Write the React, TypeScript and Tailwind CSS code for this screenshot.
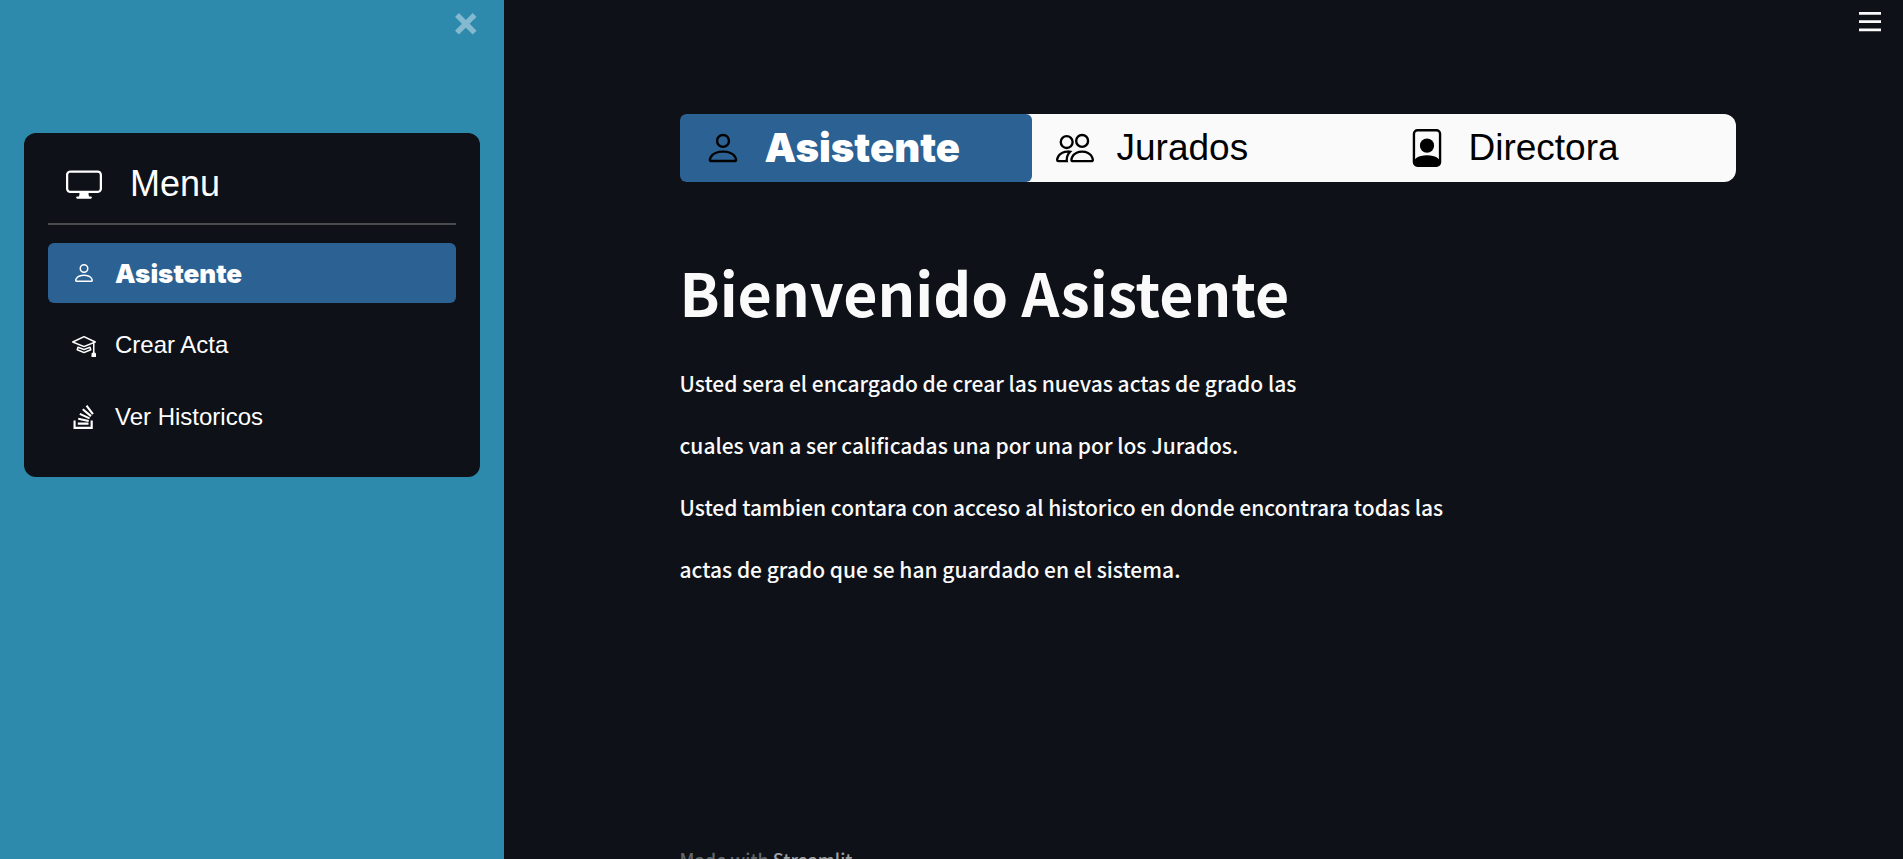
import { BsDisplay, BsFilePerson, BsMortarboard, BsPeople, BsPerson, BsStackOverflow } from "react-icons/bs";
import type { IconType } from "react-icons";

type Item = { label: string; icon: IconType; active?: boolean };

const menuItems: Item[] = [
  { label: "Asistente", icon: BsPerson, active: true },
  { label: "Crear Acta", icon: BsMortarboard },
  { label: "Ver Historicos", icon: BsStackOverflow },
];

const tabs: Item[] = [
  { label: "Asistente", icon: BsPerson, active: true },
  { label: "Jurados", icon: BsPeople },
  { label: "Directora", icon: BsFilePerson },
];

function Sidebar() {
  return (
    <aside className="w-[504px] shrink-0 bg-[#2d8aad] px-6">
      <div className="flex h-[133px] justify-end pt-[13px] pr-[3px]">
        <button type="button" aria-label="Cerrar menu" className="size-[22px] text-[#84b9cf]">
          <svg viewBox="0 0 8 8" className="size-[22px]" fill="currentColor" aria-hidden="true">
            <path d="M1.41 0l-1.41 1.41.72.72 1.78 1.81-1.78 1.78-.72.69 1.41 1.44.72-.72 1.81-1.81 1.78 1.81.69.72 1.44-1.44-.72-.69-1.81-1.78 1.81-1.81.72-.72-1.44-1.41-.69.72-1.78 1.78-1.81-1.78-.72-.72z" />
          </svg>
        </button>
      </div>
      <section className="rounded-xl bg-[#0e1117] px-6 pt-6 pb-[30px] font-['Liberation_Sans',Arial,sans-serif] text-white">
        <h2 className="mb-3 flex h-[54px] items-center gap-7 px-[18px] text-4xl">
          <BsDisplay className="size-9 shrink-0" />
          Menu
        </h2>
        <hr className="mb-[18px] border-t-2 border-[#4b4b4d]" />
        <nav className="flex flex-col gap-3">
          {menuItems.map(({ label, icon: Icon, active }) => (
            <a
              key={label}
              href="#"
              aria-current={active ? "page" : undefined}
              className={
                active
                  ? "flex h-[60px] items-center gap-[19px] rounded-md bg-[#2c6193] px-6 font-['Inter',sans-serif] text-[26px] font-black"
                  : "flex h-[60px] items-center gap-[19px] rounded-md px-6 text-2xl"
              }
            >
              <Icon className="size-6 shrink-0" />
              {label}
            </a>
          ))}
        </nav>
      </section>
    </aside>
  );
}

function Tabs() {
  return (
    <nav className="grid h-[68px] grid-cols-3 overflow-hidden rounded-l-md rounded-r-xl bg-[linear-gradient(to_right,#0e1117_8px,#fafafa_8px)] font-['Liberation_Sans',Arial,sans-serif] text-black">
      {tabs.map(({ label, icon: Icon, active }) => (
        <a
          key={label}
          href="#"
          aria-current={active ? "page" : undefined}
          className={
            active
              ? "flex items-center gap-[23px] rounded-md bg-[#2c6193] px-6 font-['Inter',sans-serif] text-[40px] font-black text-white"
              : "flex items-center gap-[23px] px-6 text-[37px]"
          }
        >
          <Icon className="size-[38px] shrink-0 text-black" />
          {label}
        </a>
      ))}
    </nav>
  );
}

export default function App() {
  return (
    <div className="flex h-screen overflow-hidden bg-[#0e1117] font-['Noto_Sans_CJK_SC',sans-serif] text-[#fafafa]">
      <Sidebar />
      <div className="flex min-w-0 grow flex-col">
        <header className="flex h-[114px] shrink-0 justify-end pt-[10px] pr-[22px]">
          <button type="button" aria-label="Opciones" className="size-[22px]">
            <svg viewBox="0 0 8 8" className="size-[22px]" fill="currentColor" aria-hidden="true">
              <path d="M0 .75v1h8v-1h-8zm0 2.97v1h8v-1h-8zm0 3v1h8v-1h-8z" />
            </svg>
          </button>
        </header>
        <div className="flex grow flex-col pr-6 pl-8">
          <div className="mx-auto w-full max-w-[1056px]">
            <Tabs />
            <main>
              <h1 className="mt-[70px] text-[59px] leading-[80px] font-bold">Bienvenido Asistente</h1>
              <p className="mt-5 text-[21px] leading-[62px] font-medium">
                Usted sera el encargado de crear las nuevas actas de grado las
                <br />
                cuales van a ser calificadas una por una por los Jurados.
                <br />
                Usted tambien contara con acceso al historico en donde encontrara todas las
                <br />
                actas de grado que se han guardado en el sistema.
              </p>
            </main>
            <footer className="mt-[244px] text-lg leading-[30px] font-medium text-[#65676b]">
              Made with{" "}
              <a href="#" className="text-[#a0a1a4]">
                Streamlit
              </a>
            </footer>
          </div>
        </div>
      </div>
    </div>
  );
}
